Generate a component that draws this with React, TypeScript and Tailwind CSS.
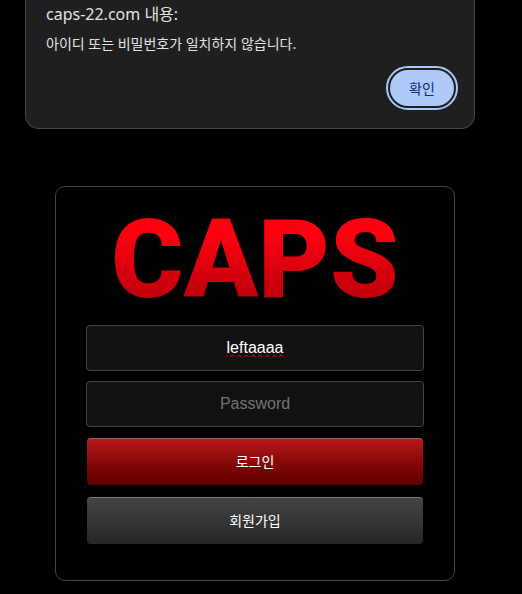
export default function App() {
  return (
    <div className="min-h-screen bg-black pl-[25px] pr-[47px] pb-3 font-['Noto_Sans','Noto_Sans_CJK_KR',sans-serif]">
      <section
        role="alertdialog"
        aria-labelledby="alert-title"
        aria-describedby="alert-message"
        className="rounded-b-[14px] border border-t-0 border-[#474747] bg-[#1f1f1f] px-5 pt-0.5 pb-[22px] text-[#e3e3e3]"
      >
        <h1 id="alert-title" className="text-base leading-6">
          caps-22.com 내용:
        </h1>
        <p id="alert-message" className="mt-2 text-sm leading-5">
          아이디 또는 비밀번호가 일치하지 않습니다.
        </p>
        <div className="mt-4 flex justify-end">
          <button
            type="button"
            className="h-9 w-16 rounded-full bg-[#afc9f8] font-['Noto_Sans_CJK_KR',sans-serif] text-sm text-[#062e6f] outline-2 outline-offset-2 outline-[#a8c7fa]"
          >
            확인
          </button>
        </div>
      </section>

      <main className="mt-[57px] mr-5 ml-[30px] rounded-[10px] border border-[#444] px-[30px] pt-6 pb-9">
        <h2 className="flex h-[114px] justify-center bg-gradient-to-b from-[#ff0010] from-20% to-[#b9000a] to-80% bg-clip-text font-[Roboto,sans-serif] text-[110px] leading-[98px] font-black text-transparent">
          CAPS
        </h2>
        <form className="flex flex-col" onSubmit={(e) => e.preventDefault()}>
          <input
            type="text"
            aria-label="아이디"
            defaultValue="leftaaaa"
            spellCheck={false}
            className="h-[46px] w-full rounded border border-[#444] bg-[#111] text-center font-['Liberation_Sans',sans-serif] text-base text-white underline decoration-[#ff0000] decoration-wavy decoration-1 underline-offset-1 [text-decoration-skip-ink:none]"
          />
          <input
            type="password"
            aria-label="Password"
            placeholder="Password"
            className="mt-2.5 h-[46px] w-full rounded border border-[#444] bg-[#111] text-center font-['Liberation_Sans',sans-serif] text-base text-white placeholder:text-[#757575]"
          />
          <button
            type="submit"
            className="mx-px mt-[11px] h-[47px] rounded border-t border-[#9b6464] bg-gradient-to-b from-[#b81818] to-[#5c0000] pb-0.5 font-['Noto_Sans_CJK_KR',sans-serif] text-sm text-white"
          >
            로그인
          </button>
          <button
            type="button"
            className="mx-px mt-3 h-[47px] rounded border-t border-[#7c7c7c] bg-gradient-to-b from-[#444] to-[#262626] pb-0.5 font-['Noto_Sans_CJK_KR',sans-serif] text-sm text-white"
          >
            회원가입
          </button>
        </form>
      </main>
    </div>
  );
}
